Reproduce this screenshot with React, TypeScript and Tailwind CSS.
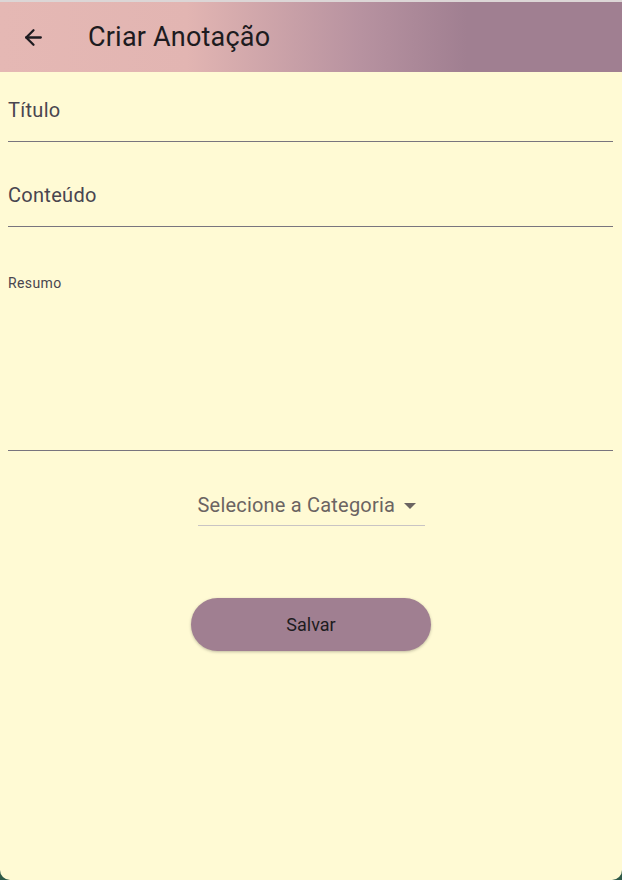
import { ArrowLeft } from 'lucide-react';

const font = { fontFamily: 'Roboto, "Noto Sans", sans-serif' };

export default function App() {
  return (
    <div className="w-[622px] h-[880px] bg-[#2f5a48]" style={font}>
      <div className="h-full flex flex-col bg-[#fffad4] rounded-b-[10px] overflow-hidden">
        {/* top edge */}
        <div className="h-[2px] bg-[#dcd6d6]" />

        {/* App bar */}
        <header className="h-[70px] flex items-center bg-[linear-gradient(90deg,#e5b8b4_0%,#e2b5b2_30%,#b792a0_58%,#a07f91_75%,#a07f91_100%)]">
          <button className="w-[66px] pl-[21px] flex items-center text-[#1d1b20]">
            <ArrowLeft className="w-[25px] h-[25px]" strokeWidth={2.2} />
          </button>
          <h1 className="ml-[22px] text-[27px] text-[#1d1b20] tracking-[0.2px]">Criar Anotação</h1>
        </header>

        {/* Form */}
        <div className="flex flex-col pl-2 pr-[9px]">
          <div className="h-[70px] flex items-end border-b border-[#79747e] pb-[16px]">
            <span className="text-[20px] text-[#49454f] tracking-[0.3px]">Título</span>
          </div>
          <div className="h-[85px] flex items-end border-b border-[#79747e] pb-[16px]">
            <span className="text-[20px] text-[#49454f] tracking-[0.3px]">Conteúdo</span>
          </div>
          <div className="h-[224px] border-b border-[#79747e] pt-[44px]">
            <span className="text-[14px] text-[#49454f] tracking-[0.4px]">Resumo</span>
          </div>
        </div>

        {/* Dropdown */}
        <div className="flex justify-center mt-[39px]">
          <div className="w-[227px] flex items-center justify-between border-b border-[#c9c4c4] pb-[5px]">
            <span className="text-[20px] text-[#6b6462] tracking-[0.2px]">Selecione a Categoria</span>
            <svg width="12" height="7" viewBox="0 0 12 7" className="mr-[9px] mt-[2px]">
              <path d="M0 0h12L6 6z" fill="#6b6462" />
            </svg>
          </div>
        </div>

        {/* Button */}
        <div className="flex justify-center mt-[72px]">
          <button className="w-[240px] h-[53px] rounded-full bg-[#a07f91] text-[18px] text-[#1d1b20] shadow-[0_1px_3px_rgba(0,0,0,0.25)]">
            Salvar
          </button>
        </div>
      </div>
    </div>
  );
}
